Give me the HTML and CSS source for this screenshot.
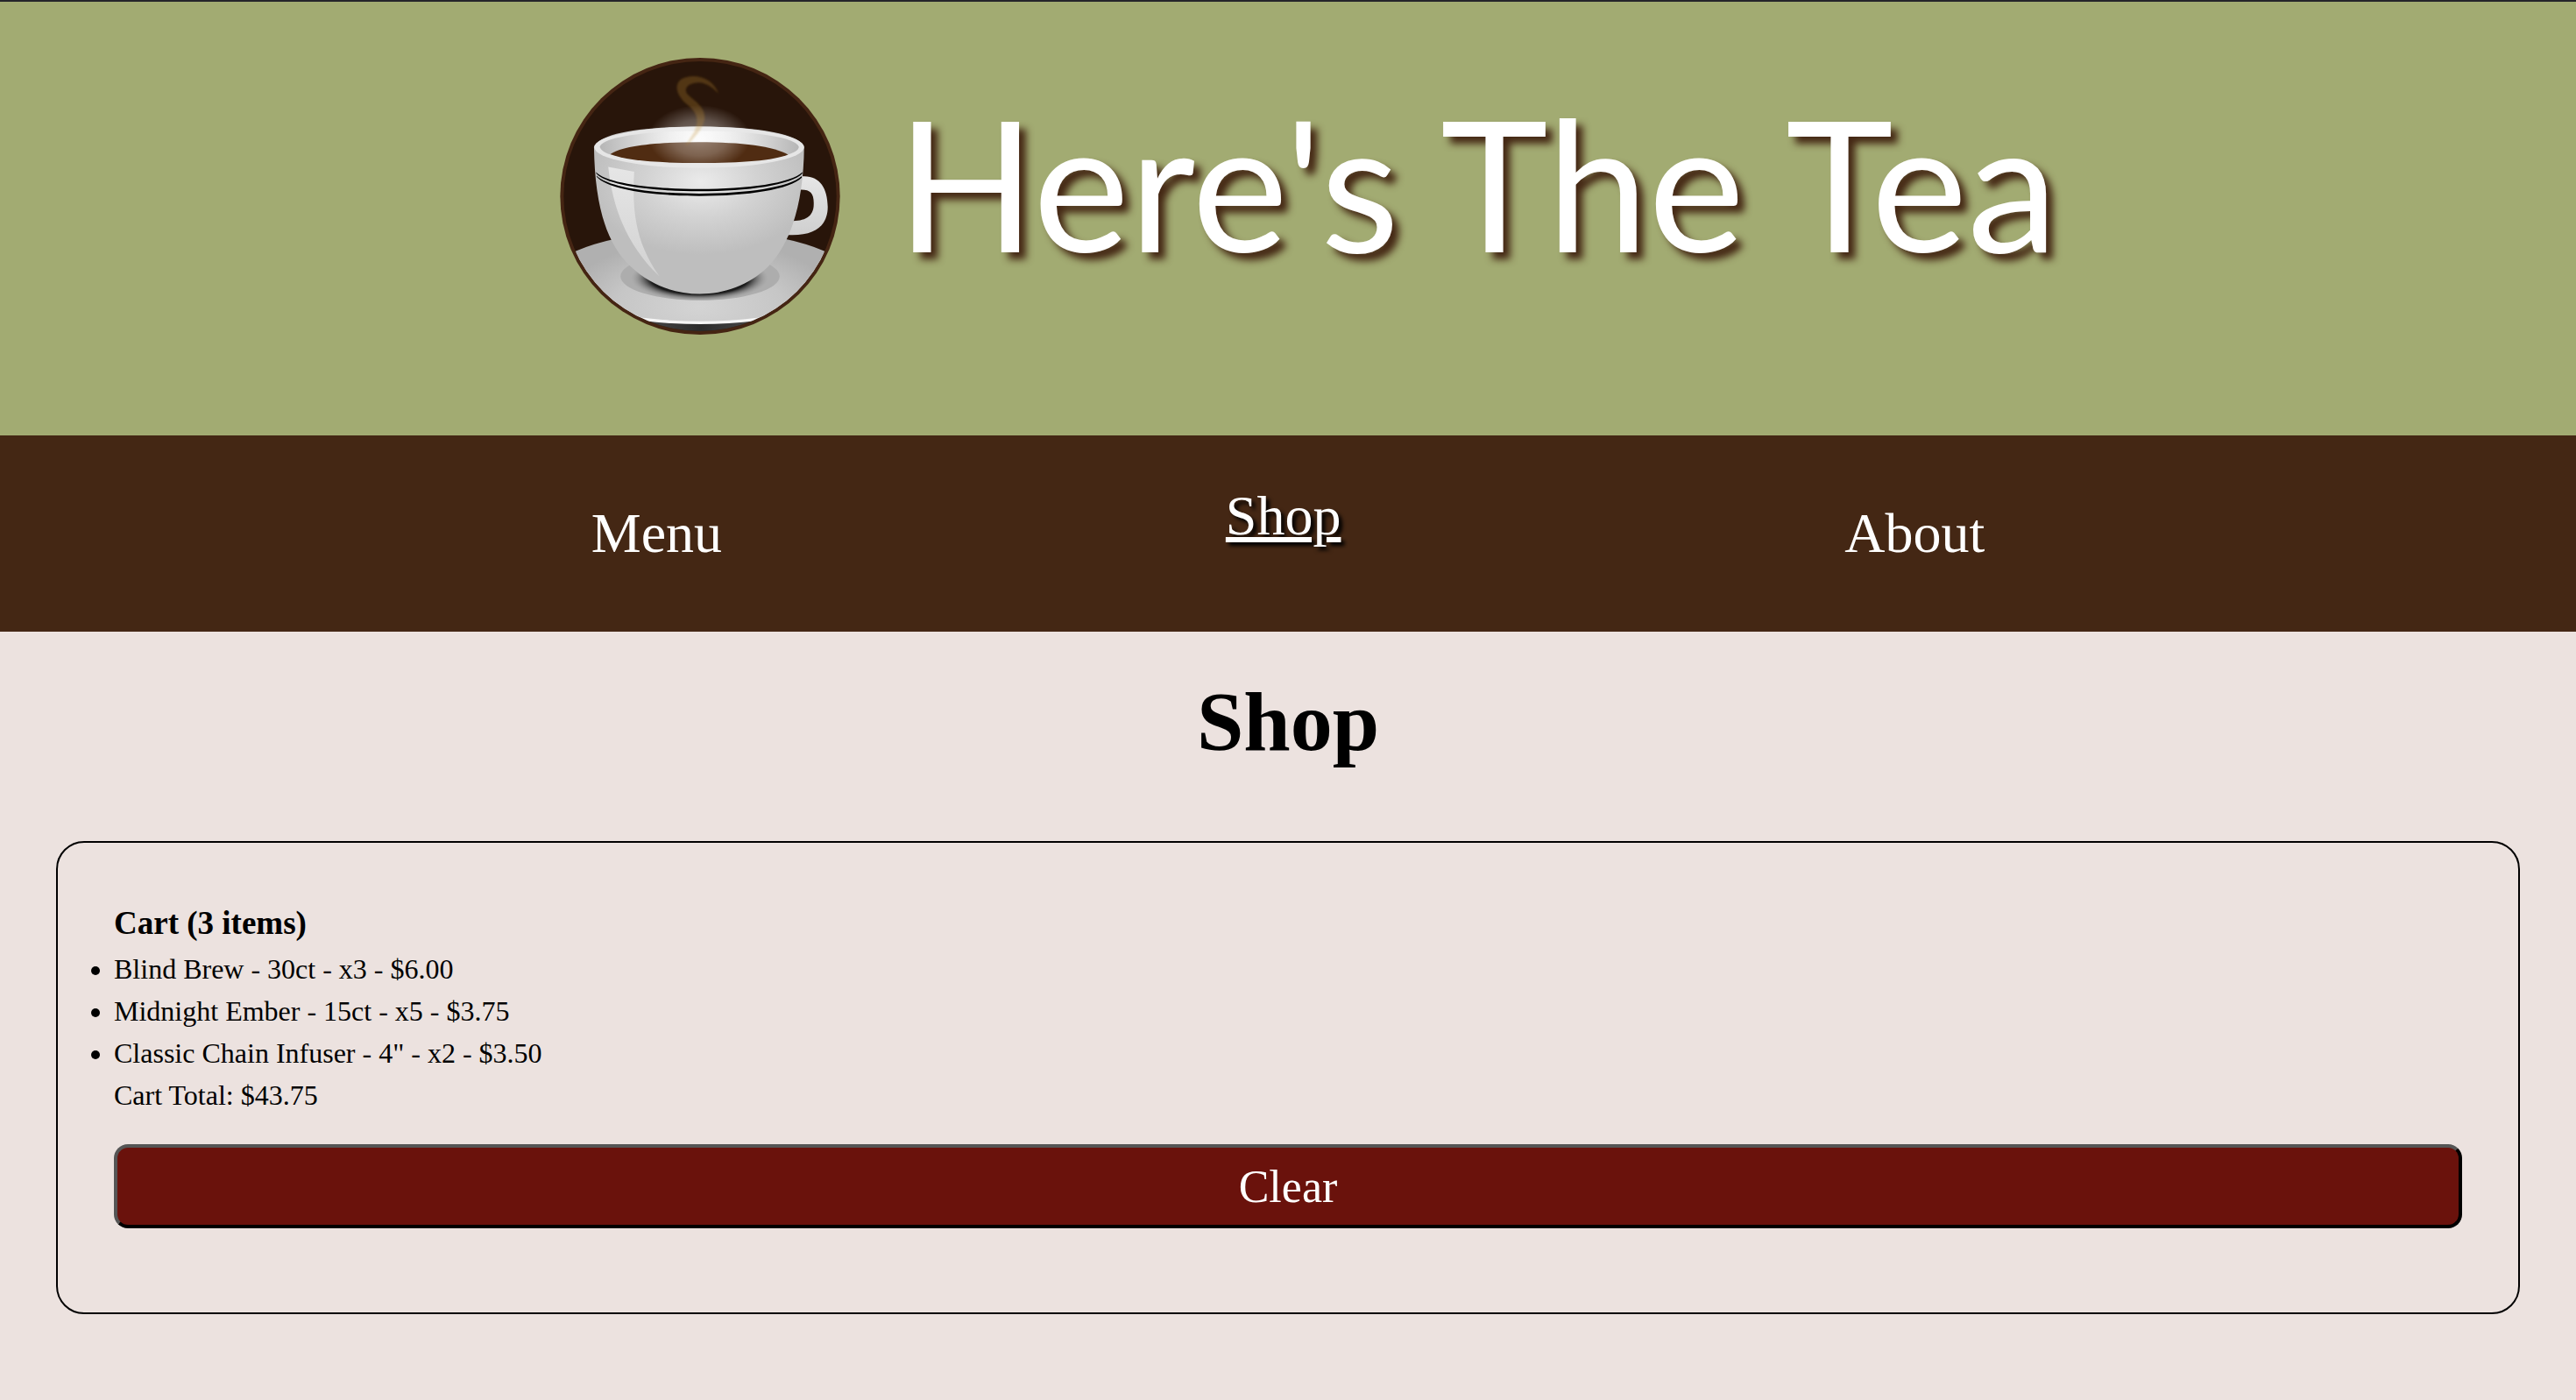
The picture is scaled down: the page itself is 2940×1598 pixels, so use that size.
FILE: index.html
```html
<!DOCTYPE html>
<html lang="en">
<head>
<meta charset="utf-8">
<meta name="viewport" content="width=device-width, initial-scale=1">
<title>Here's The Tea - Shop</title>
<link rel="stylesheet" href="styles.css">
</head>
<body>
<header class="banner">
  <svg class="logo" viewBox="57 48 960 950" role="img" aria-label="Cup of tea">
    <defs>
      <clipPath id="disc"><ellipse cx="537" cy="523" rx="468" ry="463"/></clipPath>
      <radialGradient id="cup" gradientUnits="userSpaceOnUse" cx="540" cy="475" r="390" gradientTransform="translate(0 170) scale(1 .64)">
        <stop offset="0" stop-color="#ebebeb"/><stop offset=".5" stop-color="#d2d2d2"/><stop offset="1" stop-color="#bebebe"/>
      </radialGradient>
      <radialGradient id="inside" gradientUnits="userSpaceOnUse" cx="535" cy="330" r="350">
        <stop offset="0" stop-color="#fafafa"/><stop offset=".5" stop-color="#e0e0e0"/><stop offset="1" stop-color="#b4b4b4"/>
      </radialGradient>
      <radialGradient id="saucer" gradientUnits="userSpaceOnUse" cx="537" cy="900" r="480" gradientTransform="translate(0 470) scale(1 .48)">
        <stop offset="0" stop-color="#d4d4d4"/><stop offset=".6" stop-color="#c6c6c6"/><stop offset="1" stop-color="#b0b0b0"/>
      </radialGradient>
      <radialGradient id="shade">
        <stop offset="0" stop-color="#000"/><stop offset=".72" stop-color="#1c1c1c"/><stop offset="1" stop-color="#999" stop-opacity="0"/>
      </radialGradient>
      <radialGradient id="steam">
        <stop offset="0" stop-color="#fff" stop-opacity=".42"/><stop offset=".55" stop-color="#fff" stop-opacity=".26"/><stop offset="1" stop-color="#fff" stop-opacity="0"/>
      </radialGradient>
      <linearGradient id="table"><stop offset=".3" stop-color="#484848"/><stop offset=".5" stop-color="#2b2b2b"/><stop offset=".7" stop-color="#484848"/></linearGradient>
      <linearGradient id="handle" x2="0" y2="1"><stop offset="0" stop-color="#e6e6e6"/><stop offset="1" stop-color="#cfcfcf"/></linearGradient>
      <linearGradient id="shine" x2="0" y2="1"><stop offset="0" stop-color="#e6e6e6"/><stop offset="1" stop-color="#d2d2d2"/></linearGradient>
      <filter id="soft"><feGaussianBlur stdDeviation="3"/></filter>
    </defs>
    <ellipse cx="537" cy="523" rx="480" ry="475" fill="#452513"/>
    <g clip-path="url(#disc)">
      <rect x="57" y="48" width="960" height="950" fill="#28150a"/>
      <rect x="57" y="925" width="960" height="73" fill="url(#table)"/>
      <ellipse cx="537" cy="803" rx="512" ry="159" fill="#f6f6f6"/>
      <ellipse cx="537" cy="797" rx="512" ry="155" fill="url(#saucer)"/>
      <ellipse cx="537" cy="798" rx="273" ry="82" fill="#adadad"/>
      <ellipse cx="535" cy="804" rx="236" ry="78" fill="url(#shade)"/>
      <path d="M882 455C945 448 974 492 975 558C976 625 930 663 828 655L848 608C895 608 927 595 927 550C928 512 915 498 874 501Z" fill="url(#handle)"/>
      <path d="M173 354C176 560 218 690 300 765C370 830 450 858 536 858C620 858 702 830 770 765C852 680 892 540 894 354C880 310 740 284 534 284C320 284 190 310 173 354Z" fill="url(#cup)"/>
      <ellipse cx="534" cy="355" rx="360" ry="71" fill="#e6e6e6"/>
      <path d="M193 354C200 320 350 299 534 299C720 299 868 320 876 354C874 372 835 383 800 389L270 389C235 383 200 375 193 354Z" fill="url(#inside)"/>
      <path d="M229 379C270 347 410 337 533 337C680 337 790 351 839 380C790 400 680 409 533 409C390 409 280 400 229 379Z" fill="#502c12"/>
      <path d="M222 422L311 439C302 590 322 690 397 797C292 699 237 570 222 422Z" fill="url(#shine)"/>
      <path d="M180 440C215 478 370 498 535 498C700 498 850 478 888 440L888 445C850 485 700 506 535 506C370 506 215 485 181 445Z"/>
      <path d="M182 452C220 492 375 514 535 514C700 514 845 492 886 454L886 459C845 500 700 522 535 522C375 522 220 500 183 457Z"/>
      <ellipse cx="535" cy="322" rx="175" ry="112" fill="url(#steam)"/>
      <path d="M600 170C580 112 510 98 472 122C444 144 460 180 490 206C532 240 532 262 518 300L486 352C510 330 546 296 552 260C558 215 514 195 493 172C478 152 500 132 535 133C565 136 585 155 600 170Z" fill="#c5912e" fill-opacity=".27" filter="url(#soft)"/>
    </g>
  </svg>
  <p class="brand">Here's The Tea</p>
</header>

<nav class="nav">
  <a class="nav-link" href="#menu">Menu</a>
  <a class="nav-link active" href="#shop" aria-current="page">Shop</a>
  <a class="nav-link" href="#about">About</a>
</nav>

<main class="page">
  <h1 class="title">Shop</h1>
  <section class="cart">
    <h2 class="cart-title">Cart (3 items)</h2>
    <ul class="cart-items">
      <li>Blind Brew - 30ct - x3 - $6.00</li>
      <li>Midnight Ember - 15ct - x5 - $3.75</li>
      <li>Classic Chain Infuser - 4" - x2 - $3.50</li>
    </ul>
    <p class="cart-total">Cart Total: $43.75</p>
    <button class="clear" type="button">Clear</button>
  </section>
</main>
</body>
</html>
```
FILE: styles.css
```css
* {
  box-sizing: border-box;
  margin: 0;
  padding: 0;
}

body {
  background: #ece2df;
  color: #000;
  font-family: "Liberation Serif", "Times New Roman", serif;
  font-size: 32px;
  line-height: 48px;
}

.banner {
  display: flex;
  justify-content: center;
  align-items: flex-start;
  gap: 64px;
  padding: 64px 0 115px 48px;
  border-top: 2px solid #25252a;
  background: #a2ab72;
}

.logo {
  width: 320px;
  height: 316px;
}

.brand {
  color: #fff;
  font-family: Lato, sans-serif;
  font-size: 208px;
  line-height: 284px;
  text-shadow: 8px 8px 8px #442714;
  white-space: nowrap;
}

.nav {
  display: flex;
  justify-content: space-evenly;
  padding: 64px 100px;
  background: #442714;
}

.nav-link {
  color: #fff;
  font-size: 64px;
  line-height: 96px;
  text-decoration: none;
}

.nav-link.active,
.nav-link:hover {
  text-decoration: underline;
  text-decoration-thickness: 6px;
  text-shadow: 4px 4px 4px #000;
  transform: translateY(-20px);
}

.page {
  padding: 31px 64px;
}

.title {
  margin-bottom: 64px;
  font-size: 96px;
  line-height: 144px;
  text-align: center;
}

.cart {
  padding: 64px;
  border: 2px solid #000;
  border-radius: 32px;
}

.cart-title {
  font-size: 37px;
  line-height: 56px;
}

.clear {
  display: block;
  width: 100%;
  height: 96px;
  margin: 32px 0;
  border: 4px solid;
  border-color: #555 #000 #000 #555;
  border-radius: 16px;
  background: #6a120c;
  color: #fff;
  font-family: inherit;
  font-size: 52px;
}
```
